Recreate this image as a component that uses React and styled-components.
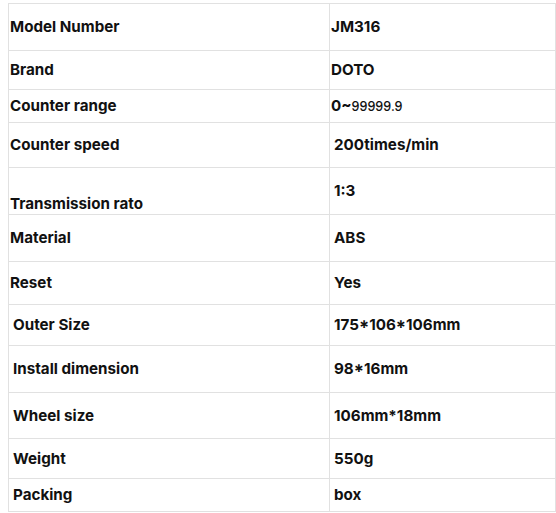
import React from 'react'
import styled, { createGlobalStyle } from 'styled-components'

const GlobalStyle = createGlobalStyle`
  body {
    margin: 0;
    background: #fff;
    font-family: Inter, "Liberation Sans", sans-serif;
    color: #111;
  }
`

const Page = styled.div`
  padding: 3px 0 0 8px;
`

const SpecTable = styled.table`
  width: 548px;
  border-collapse: collapse;
  table-layout: fixed;
`

const Row = styled.tr`
  height: ${props => props.h}px;
`

const Cell = styled.td`
  border: 1px solid #e1e1e1;
  padding: ${props => (props.low ? '14px 0 1px' : '0 0 0')} ${props => props.indent}px;
  vertical-align: ${props => (props.low ? 'bottom' : 'middle')};
  font-size: 15.2px;
  font-weight: 700;
  line-height: 18px;
  white-space: nowrap;
`

const Small = styled.span`
  font-size: 12.6px;
  font-weight: 500;
`

const rows = [
  { label: 'Model Number', value: 'JM316', h: 47, li: 1, vi: 1 },
  { label: 'Brand', value: 'DOTO', h: 39, li: 1, vi: 1 },
  { label: 'Counter range', value: <>0~<Small>99999.9</Small></>, h: 33, li: 1, vi: 1 },
  { label: 'Counter speed', value: '200times/min', h: 45, li: 1, vi: 4 },
  { label: 'Transmission rato', value: '1:3', h: 47, li: 1, vi: 4, low: true },
  { label: 'Material', value: 'ABS', h: 47, li: 1, vi: 4 },
  { label: 'Reset', value: 'Yes', h: 43, li: 1, vi: 4 },
  { label: 'Outer Size', value: '175*106*106mm', h: 41, li: 4, vi: 4 },
  { label: 'Install dimension', value: '98*16mm', h: 47, li: 4, vi: 4 },
  { label: 'Wheel size', value: '106mm*18mm', h: 46, li: 4, vi: 4 },
  { label: 'Weight', value: '550g', h: 40, li: 4, vi: 4 },
  { label: 'Packing', value: 'box', h: 33, li: 4, vi: 4 }
]

export default function App() {
  return (
    <Page>
      <GlobalStyle />
      <SpecTable>
        <colgroup>
          <col style={{ width: '321px' }} />
          <col />
        </colgroup>
        <tbody>
          {rows.map((row, idx) => (
            <Row key={idx} h={row.h}>
              <Cell indent={row.li} low={row.low}>{row.label}</Cell>
              <Cell indent={row.vi}>{row.value}</Cell>
            </Row>
          ))}
        </tbody>
      </SpecTable>
    </Page>
  )
}
